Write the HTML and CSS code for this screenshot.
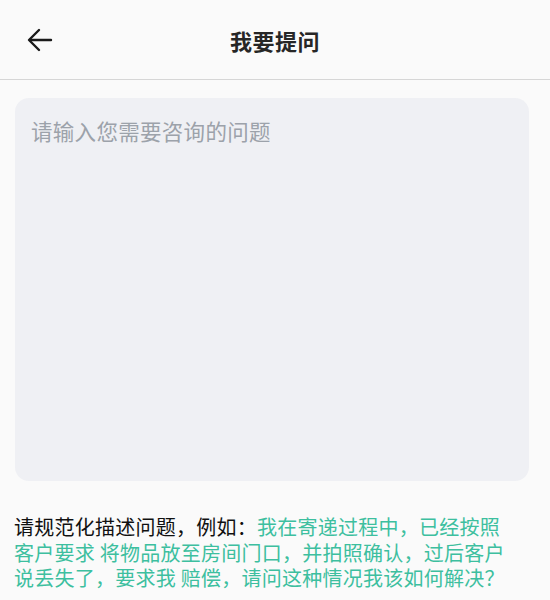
FILE: index.html
```html
<!DOCTYPE html>
<html lang="zh-CN">
<head>
<meta charset="utf-8">
<link rel="stylesheet" href="styles.css">
</head>
<body>
<header class="topbar">
  <div class="back">
    <svg width="26" height="24" viewBox="0 0 26 24" fill="none" stroke="#1a1a1a" stroke-width="2.4" stroke-linecap="round" stroke-linejoin="round">
      <path d="M24 12H3"/>
      <path d="M12 2L2 12l10 10"/>
    </svg>
  </div>
  <h1 class="title">我要提问</h1>
  <div></div>
</header>
<main class="content">
  <div class="inputbox">
    <div class="placeholder">请输入您需要咨询的问题</div>
  </div>
  <p class="hint"><span class="label">请规范化描述问题，例如：</span><span class="example">我在寄递过程中，已经按照客户要求 将物品放至房间门口，并拍照确认，过后客户说丢失了，要求我 赔偿，请问这种情况我该如何解决？</span></p>
</main>
</body>
</html>
```

FILE: styles.css
```css
html, body {
  margin: 0;
  padding: 0;
  background: #fafafa;
  font-family: "Noto Sans CJK SC", "Noto Sans", sans-serif;
}

.topbar {
  height: 80px;
  box-sizing: border-box;
  border-bottom: 1px solid #d6d6d6;
  display: grid;
  grid-template-columns: 1fr auto 1fr;
  align-items: center;
}

.back {
  padding-left: 27px;
  display: flex;
  align-items: center;
}

.back svg {
  display: block;
}

.title {
  margin: 0;
  font-size: 22px;
  font-weight: 700;
  color: #262626;
  letter-spacing: 0.5px;
}

.content {
  padding: 18px 21px 0 15px;
}

.inputbox {
  height: 383px;
  background: #eff0f4;
  border-radius: 14px;
  box-sizing: border-box;
  padding: 18px 16px;
}

.placeholder {
  font-size: 21.5px;
  line-height: 30px;
  color: #9ca2aa;
  letter-spacing: 0.3px;
}

.hint {
  margin: 33px 0 0 -1px;
  padding-right: 21px;
  font-size: 20px;
  line-height: 25.5px;
  letter-spacing: 0.25px;
}

.label {
  color: #111111;
  font-weight: 400;
}

.example {
  color: #3dbf9f;
}
```
